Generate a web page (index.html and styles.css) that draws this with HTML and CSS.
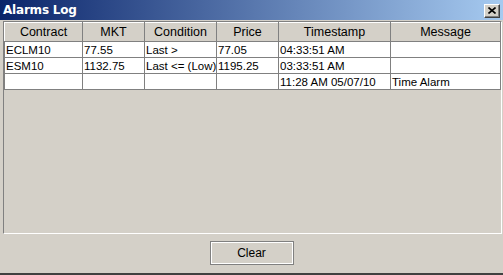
FILE: index.html
```html
<!DOCTYPE html>
<html lang="en">
  <head>
    <meta charset="UTF-8" />
    <title>Alarms Log</title>
    <link rel="stylesheet" href="styles.css">
  </head>
  <body>
    <div class="window">
      <div class="titlebar">
        <span class="title">Alarms Log</span>
        <button class="close" type="button">
          <svg width="8" height="7" viewBox="0 0 8 7">
            <path d="M0.5 0.5 L7.5 6.5 M7.5 0.5 L0.5 6.5" stroke="#000" stroke-width="1.6" />
          </svg>
        </button>
      </div>
      <div class="panel">
        <table class="grid">
          <colgroup>
            <col class="c-contract" />
            <col class="c-mkt" />
            <col class="c-cond" />
            <col class="c-price" />
            <col class="c-time" />
            <col />
          </colgroup>
          <thead>
            <tr>
              <th>Contract</th>
              <th>MKT</th>
              <th>Condition</th>
              <th>Price</th>
              <th>Timestamp</th>
              <th>Message</th>
            </tr>
          </thead>
          <tbody>
            <tr>
              <td>ECLM10</td>
              <td>77.55</td>
              <td>Last &gt;</td>
              <td>77.05</td>
              <td>04:33:51 AM</td>
              <td></td>
            </tr>
            <tr>
              <td>ESM10</td>
              <td>1132.75</td>
              <td>Last &lt;= (Low)</td>
              <td>1195.25</td>
              <td>03:33:51 AM</td>
              <td></td>
            </tr>
            <tr>
              <td></td>
              <td></td>
              <td></td>
              <td></td>
              <td>11:28 AM 05/07/10</td>
              <td>Time Alarm</td>
            </tr>
          </tbody>
        </table>
      </div>
      <div class="footer">
        <button class="btn" type="button">Clear</button>
      </div>
    </div>
  </body>
</html>
```

FILE: styles.css
```css
* {
  margin: 0;
  padding: 0;
  box-sizing: border-box;
}
body {
  font-family: "Liberation Sans", Arial, sans-serif;
  background-color: #d4d0c8;
  width: 503px;
  height: 275px;
  overflow: hidden;
}
.window {
  width: 503px;
  height: 275px;
  background-color: #d4d0c8;
  border-bottom: 2px solid #404040;
  display: flex;
  flex-direction: column;
}
.titlebar {
  height: 20px;
  background: linear-gradient(to right, #0a246a, #a6caf0);
  display: flex;
  align-items: center;
  justify-content: space-between;
  padding: 0 3px 0 3px;
}
.title {
  color: #fff;
  font-family: "DejaVu Sans", sans-serif;
  font-weight: bold;
  font-size: 12px;
  letter-spacing: -0.2px;
}
.close {
  width: 16px;
  height: 14px;
  background-color: #d4d0c8;
  border: 1px solid;
  border-color: #fff #404040 #404040 #fff;
  box-shadow: inset -1px -1px 0 #808080;
  display: flex;
  align-items: center;
  justify-content: center;
  margin-top: 1px;
}
.panel {
  margin: 1px 1px 0 3px;
  height: 213px;
  border: 1px solid;
  border-color: #808080 #fff #fff #808080;
  overflow: hidden;
}
.grid {
  width: 100%;
  table-layout: fixed;
  border-collapse: collapse;
  font-size: 11.5px;
}
.c-contract {
  width: 78px;
}
.c-mkt {
  width: 62px;
}
.c-cond {
  width: 72px;
}
.c-price {
  width: 62px;
}
.c-time {
  width: 112px;
}
.grid th {
  height: 19px;
  font-weight: normal;
  font-size: 12.5px;
  color: #000;
  background-color: #d4d0c8;
  border-top: 1px solid #fff;
  border-left: 1px solid #fff;
  border-right: 1px solid #808080;
  border-bottom: 1px solid #808080;
  text-align: center;
  padding: 0;
}
.grid td {
  height: 16px;
  background-color: #fff;
  border: 1px solid #808080;
  padding: 0 0 0 1px;
  white-space: nowrap;
  overflow: hidden;
  color: #000;
}
.footer {
  flex: 1;
  display: flex;
  justify-content: center;
  align-items: flex-start;
  padding-top: 7px;
}
.btn {
  width: 84px;
  height: 24px;
  background-color: #d4d0c8;
  border: 1px solid #808080;
  box-shadow: inset 1px 1px 0 #fff, inset -1px -1px 0 #fff;
  font-family: "Liberation Sans", Arial, sans-serif;
  font-size: 12px;
  color: #000;
}
```
